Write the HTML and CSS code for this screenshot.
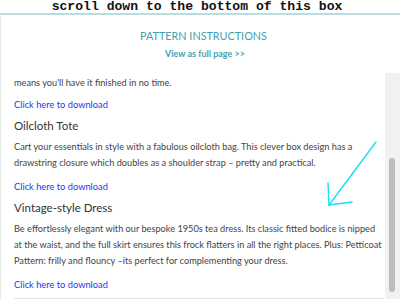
FILE: index.html
```html
<!DOCTYPE html>
<html>
<head>
<meta charset="utf-8">
<link rel="stylesheet" href="styles.css">
</head>
<body>
<div class="caption">scroll down to the bottom of this box</div>
<div class="frame">
  <div class="header">
    <div class="title">PATTERN INSTRUCTIONS</div>
    <div class="view">View as full page &gt;&gt;</div>
  </div>
  <div class="scroller">
    <div class="content">
      <p class="text">means you'll have it finished in no time.</p>
      <a class="link">Click here to download</a>
      <h3 class="item">Oilcloth Tote</h3>
      <p class="text">Cart your essentials in style with a fabulous oilcloth bag. This clever box design has a drawstring closure which doubles as a shoulder strap – pretty and practical.</p>
      <a class="link mid">Click here to download</a>
      <h3 class="item">Vintage-style Dress</h3>
      <p class="text">Be effortlessly elegant with our bespoke 1950s tea dress. Its classic fitted bodice is nipped at the waist, and the full skirt ensures this frock flatters in all the right places. Plus: Petticoat Pattern: frilly and flouncy –its perfect for complementing your dress.</p>
      <a class="link last">Click here to download</a>
      <div class="rule"></div>
    </div>
    <div class="track"><div class="thumb"></div></div>
  </div>
  <svg class="arrow" width="400" height="299" viewBox="0 0 400 299">
    <g stroke="#19e0f5" stroke-width="1.4" fill="none" stroke-linecap="round">
      <line x1="376" y1="142" x2="329" y2="205"/>
      <line x1="329" y1="205" x2="328" y2="183"/>
      <line x1="329" y1="205" x2="352" y2="202"/>
    </g>
  </svg>
</div>
</body>
</html>
```

FILE: styles.css
```css
html, body {
  margin: 0;
  padding: 0;
  background: #ffffff;
  width: 400px;
  height: 299px;
  overflow: hidden;
}
.caption {
  height: 13px;
  font-family: "Liberation Mono", monospace;
  font-weight: bold;
  font-size: 13.1px;
  line-height: 13px;
  text-align: center;
  color: #111;
  padding-right: 6px;
}
.frame {
  position: relative;
  border-top: 2px solid #b7dde1;
  border-left: 1px solid #e6e6e6;
  height: 284px;
  display: flex;
  flex-direction: column;
  font-family: Lato, "Open Sans", sans-serif;
}
.header {
  padding-top: 13px;
  height: 45px;
  text-align: center;
  color: #3fa0b1;
}
.title {
  font-size: 10.8px;
  line-height: 16px;
  padding-left: 6px;
}
.view {
  margin-top: 2px;
  font-size: 9px;
  line-height: 16px;
  font-weight: bold;
  color: #4a9fb0;
  padding-left: 9px;
}
.scroller {
  flex: 1;
  display: flex;
  min-height: 0;
}
.content {
  flex: 1;
  padding-left: 13px;
  padding-right: 1px;
  padding-top: 2px;
  display: flex;
  flex-direction: column;
  align-items: flex-start;
}
.text {
  margin: 0;
  font-size: 9.2px;
  line-height: 16px;
  color: #444;
}
.link {
  margin-top: 6px;
  font-size: 9.3px;
  line-height: 16px;
  color: #2f2ff0;
}
.mid {
  margin-top: 8px;
}
.item {
  margin: 5px 0 5px 0;
  font-size: 11.5px;
  line-height: 16px;
  font-weight: normal;
  color: #333;
}
.last {
  margin-top: 8px;
}
.rule {
  align-self: stretch;
  margin-top: 5px;
  height: 1px;
  background: #e2e2e2;
}
.track {
  width: 15px;
  background: #f1f1f1;
  display: flex;
  flex-direction: column;
  align-items: center;
}
.thumb {
  margin-top: 85px;
  width: 6px;
  height: 134px;
  border-radius: 3px;
  background: #bdbdbd;
  margin-left: -2px;
}
.arrow {
  position: absolute;
  left: -1px;
  top: -15px;
  pointer-events: none;
}
```
